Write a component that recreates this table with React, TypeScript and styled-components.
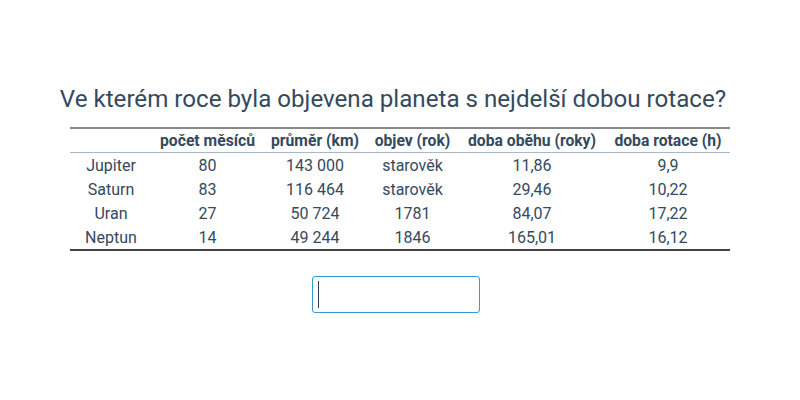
import React from "react";
import styled, { createGlobalStyle } from "styled-components";

const Global = createGlobalStyle`
  html, body { margin: 0; padding: 0; background: #fff; }
  body { font-family: Roboto, "Liberation Sans", sans-serif; color: #34495e; }
`;

const Page = styled.div`
  width: 800px;
  height: 400px;
  display: flex;
  flex-direction: column;
  align-items: center;
  padding-top: 83px;
  box-sizing: border-box;
`;

const Title = styled.h1`
  margin: 0 0 12px;
  padding-right: 14px;
  font-size: 24.15px;
  font-weight: 400;
  line-height: 32px;
  color: #34495e;
`;

const Table = styled.table`
  width: 660px;
  table-layout: fixed;
  border-collapse: collapse;
  border-top: 2px solid #888;
  border-bottom: 2px solid #444;
  font-size: 16px;
  color: #34495e;
`;

const Col = styled.col<{ $w: number }>`
  width: ${(p) => p.$w}px;
`;

const Th = styled.th`
  font-size: 15.7px;
  font-weight: 700;
  height: 23px;
  padding: 0;
  text-align: center;
  border-bottom: 1px solid #a9b8c8;
  white-space: nowrap;
`;

const Td = styled.td`
  height: 24px;
  padding: 0;
  text-align: center;
  white-space: nowrap;
`;

const InputWrap = styled.div`
  position: relative;
  margin-top: 25px;
  margin-right: 8px;
`;

const Input = styled.input`
  width: 168px;
  height: 37px;
  box-sizing: border-box;
  border: 1px solid #3498db;
  border-radius: 3px;
  outline: none;
  padding: 0 6px;
  font: inherit;
  font-size: 16px;
  color: #34495e;
  caret-color: transparent;
`;

const Caret = styled.span`
  position: absolute;
  left: 6px;
  top: 5px;
  width: 1px;
  height: 27px;
  background: #2c3e50;
`;

const widths = [82, 111, 104, 91, 148, 124];

const rows = [
  ["Jupiter", "80", "143 000", "starověk", "11,86", "9,9"],
  ["Saturn", "83", "116 464", "starověk", "29,46", "10,22"],
  ["Uran", "27", "50 724", "1781", "84,07", "17,22"],
  ["Neptun", "14", "49 244", "1846", "165,01", "16,12"],
];

const headers = ["", "počet měsíců", "průměr (km)", "objev (rok)", "doba oběhu (roky)", "doba rotace (h)"];

export default function App() {
  return (
    <>
      <Global />
      <Page>
        <Title>Ve kterém roce byla objevena planeta s nejdelší dobou rotace?</Title>
        <Table>
          <colgroup>
            {widths.map((w, i) => (
              <Col key={i} $w={w} />
            ))}
          </colgroup>
          <thead>
            <tr>
              {headers.map((h, i) => (
                <Th key={i}>{h}</Th>
              ))}
            </tr>
          </thead>
          <tbody>
            {rows.map((r) => (
              <tr key={r[0]}>
                {r.map((c, i) => (
                  <Td key={i}>{c}</Td>
                ))}
              </tr>
            ))}
          </tbody>
        </Table>
        <InputWrap>
          <Input type="text" aria-label="odpověď" />
          <Caret />
        </InputWrap>
      </Page>
    </>
  );
}
